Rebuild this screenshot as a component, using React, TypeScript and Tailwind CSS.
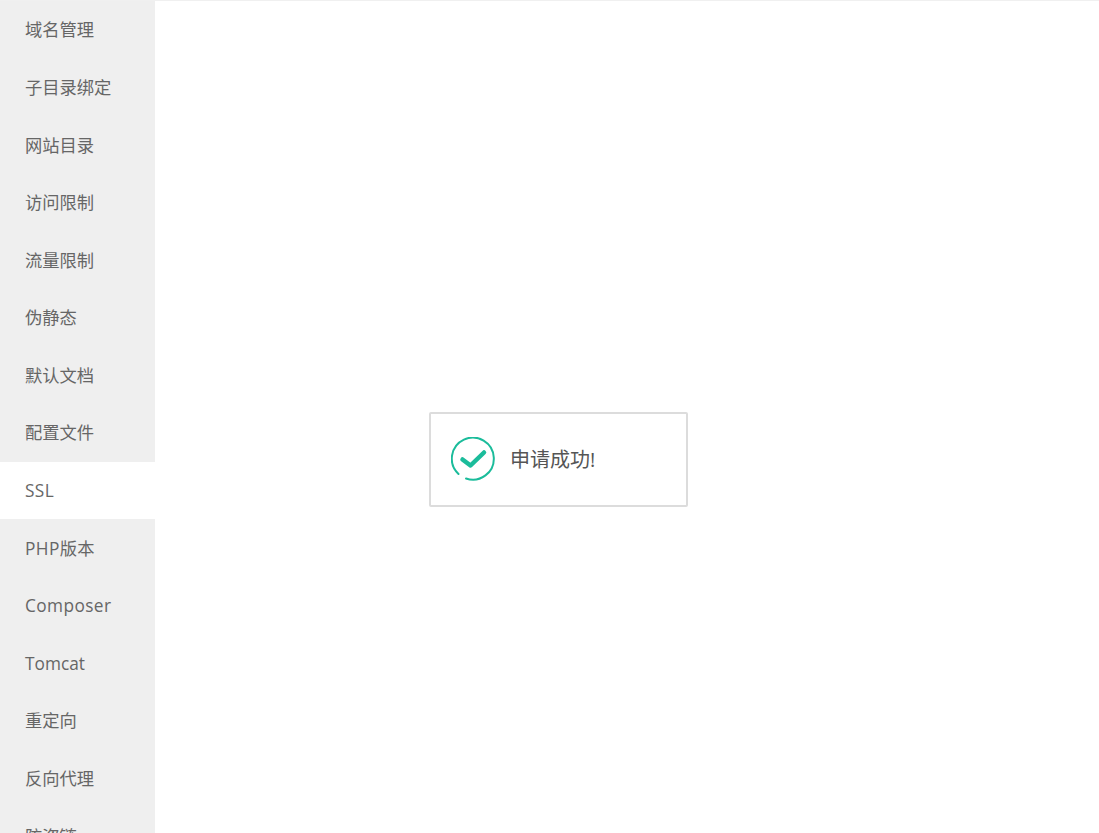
const menuItems = [
  { label: "域名管理" },
  { label: "子目录绑定" },
  { label: "网站目录" },
  { label: "访问限制" },
  { label: "流量限制" },
  { label: "伪静态" },
  { label: "默认文档" },
  { label: "配置文件" },
  { label: "SSL", latin: true, active: true },
  { label: "PHP版本", latin: true },
  { label: "Composer", latin: true },
  { label: "Tomcat" },
  { label: "重定向" },
  { label: "反向代理" },
  { label: "防盗链" },
];

function SuccessIcon() {
  return (
    <svg viewBox="0 0 46 46" className="h-[46px] w-[46px] shrink-0" fill="none">
      <path
        d="M15 41.5A21 21 0 1 0 7.5 37"
        stroke="#1bbc9b"
        strokeWidth="2"
        strokeLinecap="round"
      />
      <path
        d="M11.5 22.5L19.5 28.5L33 15.5"
        stroke="#1bbc9b"
        strokeWidth="4.5"
        strokeLinecap="round"
        strokeLinejoin="round"
      />
    </svg>
  );
}

export default function App() {
  return (
    <div className="flex h-[833px] w-[1099px] overflow-hidden border-t border-t-[#f0f0f0] bg-white font-['Open_Sans','Noto_Sans_CJK_SC',sans-serif] text-[17.28px] text-[#666]">
      <ul className="h-full w-[155px] shrink-0 overflow-hidden bg-[#efefef]">
        {menuItems.map((item) => (
          <li
            key={item.label}
            className={`flex h-[57.6px] items-center pl-[25px] pt-px ${item.active ? "bg-white" : ""} ${item.latin ? "tracking-[0.4px]" : ""}`}
          >
            {item.label}
          </li>
        ))}
      </ul>
      <main className="flex flex-1 justify-start pl-[274px] pt-[411px]">
        <div className="flex h-[95px] w-[259px] items-center gap-[13px] rounded-[2px] border-2 border-[#dcdcdc] bg-white pl-[20px]">
          <SuccessIcon />
          <span className="text-[20px] text-[#555]">申请成功!</span>
        </div>
      </main>
    </div>
  );
}
